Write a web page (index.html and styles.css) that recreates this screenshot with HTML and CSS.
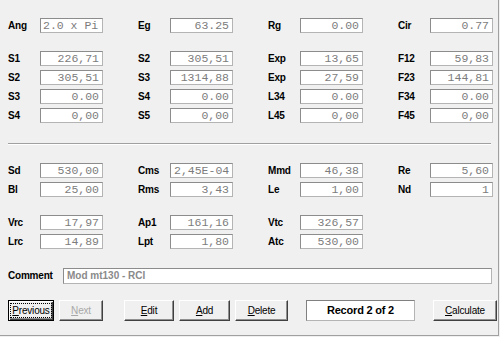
FILE: index.html
```html
<!DOCTYPE html>
<html lang="en">
<head>
    <meta charset="utf-8">
    <title>Speaker record</title>
    <link rel="stylesheet" href="styles.css">
</head>
<body>
<div class="window">

    <!-- general -->
    <div class="grid first">
        <div class="field"><span class="lbl">Ang</span><span class="val left">2.0 x Pi</span></div>
        <div class="field"><span class="lbl">Eg</span><span class="val">63.25</span></div>
        <div class="field"><span class="lbl">Rg</span><span class="val">0.00</span></div>
        <div class="field"><span class="lbl">Cir</span><span class="val">0.77</span></div>
    </div>

    <!-- sections -->
    <div class="grid sections">
        <div class="field"><span class="lbl">S1</span><span class="val">226,71</span></div>
        <div class="field"><span class="lbl">S2</span><span class="val">305,51</span></div>
        <div class="field"><span class="lbl">Exp</span><span class="val">13,65</span></div>
        <div class="field"><span class="lbl">F12</span><span class="val">59,83</span></div>

        <div class="field"><span class="lbl">S2</span><span class="val">305,51</span></div>
        <div class="field"><span class="lbl">S3</span><span class="val">1314,88</span></div>
        <div class="field"><span class="lbl">Exp</span><span class="val">27,59</span></div>
        <div class="field"><span class="lbl">F23</span><span class="val">144,81</span></div>

        <div class="field"><span class="lbl">S3</span><span class="val">0.00</span></div>
        <div class="field"><span class="lbl">S4</span><span class="val">0.00</span></div>
        <div class="field"><span class="lbl">L34</span><span class="val">0.00</span></div>
        <div class="field"><span class="lbl">F34</span><span class="val">0.00</span></div>

        <div class="field"><span class="lbl">S4</span><span class="val">0,00</span></div>
        <div class="field"><span class="lbl">S5</span><span class="val">0,00</span></div>
        <div class="field"><span class="lbl">L45</span><span class="val">0,00</span></div>
        <div class="field"><span class="lbl">F45</span><span class="val">0,00</span></div>
    </div>

    <div class="sep"></div>

    <!-- driver -->
    <div class="grid driver">
        <div class="field"><span class="lbl">Sd</span><span class="val">530,00</span></div>
        <div class="field"><span class="lbl">Cms</span><span class="val">2,45E-04</span></div>
        <div class="field"><span class="lbl">Mmd</span><span class="val">46,38</span></div>
        <div class="field"><span class="lbl">Re</span><span class="val">5,60</span></div>

        <div class="field"><span class="lbl">Bl</span><span class="val">25,00</span></div>
        <div class="field"><span class="lbl">Rms</span><span class="val">3,43</span></div>
        <div class="field"><span class="lbl">Le</span><span class="val">1,00</span></div>
        <div class="field"><span class="lbl">Nd</span><span class="val">1</span></div>
    </div>

    <!-- chambers -->
    <div class="grid chambers">
        <div class="field"><span class="lbl">Vrc</span><span class="val">17,97</span></div>
        <div class="field"><span class="lbl">Ap1</span><span class="val">161,16</span></div>
        <div class="field"><span class="lbl">Vtc</span><span class="val">326,57</span></div>
        <div class="field"></div>

        <div class="field"><span class="lbl">Lrc</span><span class="val">14,89</span></div>
        <div class="field"><span class="lbl">Lpt</span><span class="val">1,80</span></div>
        <div class="field"><span class="lbl">Atc</span><span class="val">530,00</span></div>
        <div class="field"></div>
    </div>

    <div class="comment-row">
        <span class="lbl wide">Comment</span>
        <span class="comment">Mod mt130 - RCI</span>
    </div>

    <div class="buttons">
        <button class="btn default b-prev"><span class="focus"><u>P</u>revious</span></button>
        <button class="btn b-next" disabled><u>N</u>ext</button>
        <button class="btn b-edit"><u>E</u>dit</button>
        <button class="btn b-add"><u>A</u>dd</button>
        <button class="btn b-del"><u>D</u>elete</button>
        <div class="record">Record 2 of 2</div>
        <button class="btn b-calc"><u>C</u>alculate</button>
    </div>

</div>
</body>
</html>
```

FILE: styles.css
```css
body {
    margin: 0;
    background: #f0f0f0;
}

.window {
    width: 499px;
    height: 336px;
    box-sizing: border-box;
    padding: 18px 0 0 8px;
    border-right: 1px solid #a0a0a0;
    border-bottom: 1px solid #a0a0a0;
    background: #f0f0f0;
    font-family: "Liberation Sans", Arial, sans-serif;
    overflow: hidden;
}

/* four columns of label + box */
.grid {
    display: grid;
    grid-template-columns: 130px 130px 130px 95px;
    row-gap: 4px;
}

.sections { margin-top: 18px; }
.driver { margin-top: 0; }
.chambers { margin-top: 18px; }

.field {
    display: flex;
    align-items: center;
    height: 15px;
}

.lbl {
    width: 32px;
    font-size: 10px;
    font-weight: bold;
    letter-spacing: -0.2px;
    color: #000;
}

.val {
    width: 63px;
    height: 15px;
    box-sizing: border-box;
    background: #fff;
    border: 1px solid #8c8c8c;
    border-right-color: #b4b4b4;
    border-bottom-color: #b4b4b4;
    padding: 0 3px;
    font-family: "Liberation Mono", "Courier New", monospace;
    font-size: 11.5px;
    line-height: 13px;
    color: #7c7c7c;
    text-align: right;
    white-space: nowrap;
    overflow: hidden;
}

.val.left { text-align: left; padding-left: 2px; }

/* etched divider */
.sep {
    height: 0;
    margin: 20px 7px 18px 0;
    border-top: 1px solid #a0a0a0;
    border-bottom: 1px solid #fff;
}

.comment-row {
    display: flex;
    align-items: center;
    margin-top: 19px;
    height: 15px;
}

.lbl.wide { width: 55px; }

.comment {
    width: 429px;
    height: 16px;
    box-sizing: border-box;
    background: #fff;
    border: 1px solid #8c8c8c;
    border-right-color: #b4b4b4;
    border-bottom-color: #b4b4b4;
    padding: 0 3px;
    font-size: 10px;
    font-weight: bold;
    line-height: 14px;
    color: #8a8a8a;
}

.buttons {
    display: flex;
    align-items: center;
    margin-top: 17px;
    height: 21px;
}

.btn {
    height: 21px;
    box-sizing: border-box;
    margin: 0;
    padding: 0;
    background: #f0f0f0;
    border: 1px solid;
    border-color: #fff #404040 #404040 #fff;
    box-shadow: inset -1px -1px #909090;
    font-family: "Liberation Sans", Arial, sans-serif;
    font-size: 10px;
    letter-spacing: -0.2px;
    color: #000;
}

.btn:disabled { color: #a8a8a8; }

.btn.default {
    border: 1px solid #000;
    box-shadow: inset 1px 1px #fff, inset -1px -1px #404040, inset -2px -2px #909090;
}

.focus {
    display: inline-block;
    padding: 1px 1px;
    border: 1px dotted #000;
}

.b-prev { width: 46px; }
.b-next { width: 44px; margin-left: 5px; }
.b-edit { width: 50px; margin-left: 21px; }
.b-add { width: 51px; margin-left: 5px; }
.b-del { width: 53px; margin-left: 5px; }
.b-calc { width: 64px; margin-left: 18px; }

.record {
    width: 109px;
    height: 21px;
    box-sizing: border-box;
    margin-left: 18px;
    background: #fff;
    border: 1px solid #808080;
    border-right-color: #b4b4b4;
    border-bottom-color: #b4b4b4;
    font-size: 11px;
    font-weight: bold;
    letter-spacing: -0.2px;
    line-height: 19px;
    text-align: center;
}
```
